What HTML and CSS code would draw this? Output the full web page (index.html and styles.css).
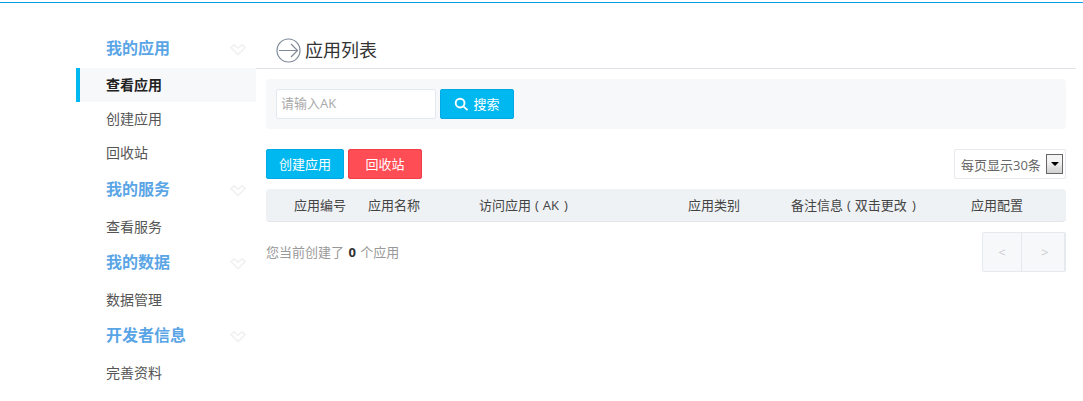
FILE: index.html
```html
<!DOCTYPE html>
<html lang="zh-CN">
<head>
<meta charset="utf-8">
<title>应用列表</title>
<link rel="stylesheet" href="styles.css">
</head>
<body>
<div class="topline"></div>
<div class="page">
  <nav class="sidebar">
    <div class="nav-head"><span>我的应用</span><svg class="chev" viewBox="0 0 16 12"><path d="M1 3.5 4 .8 8 4.3 12 .8 15 3.5 8 10.5Z"/></svg></div>
    <a class="nav-item active">查看应用</a>
    <a class="nav-item">创建应用</a>
    <a class="nav-item">回收站</a>
    <div class="nav-head later"><span>我的服务</span><svg class="chev" viewBox="0 0 16 12"><path d="M1 3.5 4 .8 8 4.3 12 .8 15 3.5 8 10.5Z"/></svg></div>
    <a class="nav-item">查看服务</a>
    <div class="nav-head"><span>我的数据</span><svg class="chev" viewBox="0 0 16 12"><path d="M1 3.5 4 .8 8 4.3 12 .8 15 3.5 8 10.5Z"/></svg></div>
    <a class="nav-item">数据管理</a>
    <div class="nav-head"><span>开发者信息</span><svg class="chev" viewBox="0 0 16 12"><path d="M1 3.5 4 .8 8 4.3 12 .8 15 3.5 8 10.5Z"/></svg></div>
    <a class="nav-item">完善资料</a>
  </nav>
  <main class="main">
    <header class="title-row">
      <svg class="title-icon" viewBox="0 0 25 25"><circle cx="12.5" cy="12.5" r="11.5"/><path d="M3 12.5H21.5M15 6 21.5 12.5 15 19"/></svg>
      <h1 class="title">应用列表</h1>
    </header>
    <div class="content">
      <div class="search-bar">
        <input class="search-input" type="text" placeholder="请输入AK">
        <button class="btn btn-blue btn-search"><svg class="search-icon" viewBox="0 0 16 16"><circle cx="6.5" cy="6.5" r="4.7"/><path d="M10 10l4.5 4"/></svg>搜索</button>
      </div>
      <div class="actions">
        <button class="btn btn-blue btn-create">创建应用</button>
        <button class="btn btn-red">回收站</button>
        <div class="page-size"><span>每页显示30条</span><span class="drop"><i></i></span></div>
      </div>
      <div class="table-head">
        <span>应用编号</span><span>应用名称</span><span>访问应用<span class="pl">(</span>AK<span class="pr">)</span></span><span>应用类别</span><span>备注信息<span class="pl">(</span>双击更改<span class="pr">)</span></span><span>应用配置</span>
      </div>
      <div class="footer-row">
        <p class="count">您当前创建了 <b>0</b> 个应用</p>
        <div class="pager"><a>&lt;</a><a>&gt;</a></div>
      </div>
    </div>
  </main>
</div>
</body>
</html>
```
FILE: styles.css
```css
* { box-sizing: border-box; }
html, body { margin: 0; padding: 0; background: #fff; }
body {
  font-family: "Open Sans", "Noto Sans CJK SC", sans-serif;
  font-size: 13px;
  color: #555;
  height: 401px;
  overflow: hidden;
}
.topline { height: 3px; border-bottom: 1px solid #00a0e9; }
.page { display: flex; padding-left: 76px; }
.sidebar { width: 180px; flex: none; padding-top: 27px; }
.nav-head {
  height: 36px;
  margin-bottom: 2px;
  padding: 0 10px 2px 30px;
  display: flex;
  align-items: center;
  justify-content: space-between;
  font-size: 16px;
  font-weight: 700;
  color: #5aa5e6;
}
.nav-head.later { margin-top: 1px; }
.nav-item + .nav-head { margin-bottom: 3px; }
.chev { width: 16px; height: 12px; margin-top: 5px; }
.chev path { fill: none; stroke: #f0f1f3; stroke-width: 1.6; }
.nav-item {
  display: flex;
  align-items: center;
  height: 34px;
  padding: 0 0 2px 30px;
  font-size: 14px;
  color: #555;
}
.nav-item.active {
  border-left: 4px solid #00b8f0;
  padding-left: 26px;
  background: #f7f8fa;
  color: #222;
  font-weight: 700;
}
.main { width: 820px; flex: none; }
.title-row {
  height: 66px;
  padding: 0 0 5px 20px;
  display: flex;
  align-items: flex-end;
  gap: 4px;
  border-bottom: 1px solid #dfe3e8;
}
.title-icon { width: 25px; height: 25px; }
.title-icon circle, .title-icon path { fill: none; stroke: #7f8a99; stroke-width: 1.2; }
.title { margin: 0 0 -1px; font-size: 18px; font-weight: 400; line-height: 27px; color: #333; }
.content { padding: 10px 10px 0; }
.search-bar {
  height: 50px;
  padding: 10px;
  display: flex;
  gap: 4px;
  background: #f7f8fa;
  border-radius: 4px;
}
.search-input {
  width: 160px;
  height: 30px;
  padding: 0 4px 2px;
  border: 1px solid #e3e7ee;
  border-radius: 2px;
  background: #fff;
  font: inherit;
  outline: none;
}
.search-input::placeholder { color: #aaa; opacity: 1; }
.btn {
  height: 30px;
  padding: 0 0 2px;
  display: inline-flex;
  align-items: center;
  justify-content: center;
  border-radius: 2px;
  font: inherit;
  color: #fff;
}
.btn-blue { background: #00b8f0; border: 1px solid #00a8e4; }
.btn-red { background: #ff4d55; border: 1px solid #f04048; width: 74px; }
.btn-search { width: 74px; gap: 4px; }
.btn-create { width: 78px; }
.search-icon { width: 15px; height: 15px; margin-top: 2px; }
.search-icon circle, .search-icon path { fill: none; stroke: #fff; stroke-width: 2; }
.actions { margin-top: 20px; display: flex; gap: 4px; }
.page-size {
  margin-left: auto;
  width: 112px;
  height: 30px;
  padding: 0 2px 0 6px;
  display: flex;
  align-items: center;
  justify-content: space-between;
  border: 1px solid #e6e9ee;
  border-radius: 2px;
  color: #666;
}
.drop {
  width: 17px;
  height: 20px;
  display: flex;
  justify-content: center;
  padding-top: 7px;
  border: 1px solid #666;
  background: linear-gradient(#f4f4f4 0, #f4f4f4 35%, #d0d0d0 100%);
}
.drop i {
  width: 0;
  height: 0;
  border: 4px solid transparent;
  border-top: 4px solid #000;
  border-bottom: 0;
}
.table-head {
  margin-top: 10px;
  height: 33px;
  padding: 0 0 2px 28px;
  display: grid;
  grid-template-columns: 74px 111px 209px 103px 180px 1fr;
  align-items: center;
  background: #eff2f5;
  border-bottom: 1px solid #e2e6eb;
  border-radius: 4px;
  color: #444;
}
.pl { margin: 0 4px; }
.pr { margin-left: 5px; }
.footer-row { margin-top: 10px; display: flex; justify-content: space-between; align-items: flex-start; }
.count { margin: 0; padding-top: 10px; line-height: 20px; color: #999; word-spacing: 1px; }
.count b { color: #333; }
.pager {
  width: 84px;
  height: 40px;
  display: flex;
  background: #f7f8fa;
  border: 1px solid #e6e9ee;
  border-right-width: 2px;
  border-radius: 2px;
}
.pager a {
  flex: 1;
  display: flex;
  align-items: center;
  justify-content: center;
  color: #ccc;
}
.pager a:first-child { flex: none; width: 38px; }
.pager a + a { border-left: 1px solid #e6e9ee; padding-left: 4px; }
```
